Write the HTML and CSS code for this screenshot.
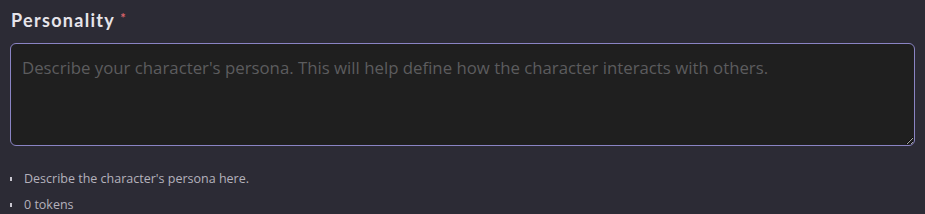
FILE: index.html
```html
<!DOCTYPE html>
<html lang="en">
<head>
  <meta charset="UTF-8">
  <title>Personality</title>
  <link rel="stylesheet" href="styles.css">
</head>
<body>
  <div class="field">
    <label class="field-label" for="persona">Personality <span class="req">*</span></label>
    <textarea id="persona" class="persona-input" placeholder="Describe your character's persona. This will help define how the character interacts with others."></textarea>
    <ul class="hints">
      <li>Describe the character's persona here.</li>
      <li>0 tokens</li>
    </ul>
  </div>
</body>
</html>
```

FILE: styles.css
```css
body {
  margin: 0;
  background: #2c2b35;
  font-family: 'Open Sans', 'Noto Sans', sans-serif;
  color: #d8d6de;
}

.field {
  padding: 6px 10px 0 10px;
}

.field-label {
  display: block;
  font-family: 'Lato', sans-serif;
  font-weight: 700;
  font-size: 18px;
  letter-spacing: 1.3px;
  color: #e6e4ea;
  line-height: 24px;
  margin-left: 1px;
}

.req {
  color: #d9646a;
  font-size: 13px;
  vertical-align: 4px;
}

.persona-input {
  display: block;
  box-sizing: border-box;
  width: 100%;
  height: 103px;
  margin-top: 11px;
  padding: 12px 11px;
  background: #1f1f1f;
  border: 1.5px solid #8a84c4;
  border-radius: 6px;
  color: #ddd;
  font-family: 'Open Sans', sans-serif;
  font-size: 16.8px;
  resize: vertical;
  outline: none;
}

.persona-input::placeholder {
  color: #5c5c5e;
}

.hints {
  list-style: none;
  margin: 20px 0 0 0;
  padding: 0;
}

.hints li {
  position: relative;
  padding-left: 14px;
  font-size: 12.5px;
  color: #b4b2bc;
  line-height: 26px;
}

.hints li::before {
  content: '';
  position: absolute;
  left: 0;
  top: 11px;
  width: 1.5px;
  height: 4px;
  background: #c8c6cf;
}
```
